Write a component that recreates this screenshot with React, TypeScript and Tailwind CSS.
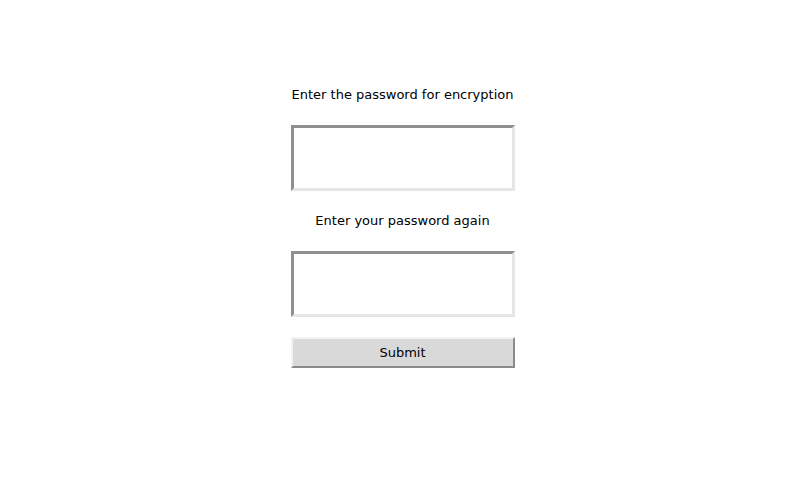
export default function App() {
  return (
    <main className="w-[805px] h-[499px] bg-white flex flex-col items-center pt-[86px] text-[#000] [font-family:'DejaVu_Sans',sans-serif] text-[13px]">
      <p className="leading-[18px] h-[18px]">Enter the password for encryption</p>
      <input
        type="password"
        className="mt-[21px] w-[224px] h-[66px] bg-white border-[3px] border-t-[#8f8f8f] border-l-[#8f8f8f] border-b-[#e6e6e6] border-r-[#e6e6e6] outline-none"
      />
      <p className="mt-[21px] leading-[18px] h-[18px]">Enter your password again</p>
      <input
        type="password"
        className="mt-[21px] w-[224px] h-[66px] bg-white border-[3px] border-t-[#8f8f8f] border-l-[#8f8f8f] border-b-[#e6e6e6] border-r-[#e6e6e6] outline-none"
      />
      <button className="mt-[20px] w-[224px] h-[31px] bg-[#d9d9d9] border-2 border-t-[#f2f2f2] border-l-[#f2f2f2] border-b-[#8a8a8a] border-r-[#8a8a8a] text-[13px]">
        Submit
      </button>
    </main>
  )
}
